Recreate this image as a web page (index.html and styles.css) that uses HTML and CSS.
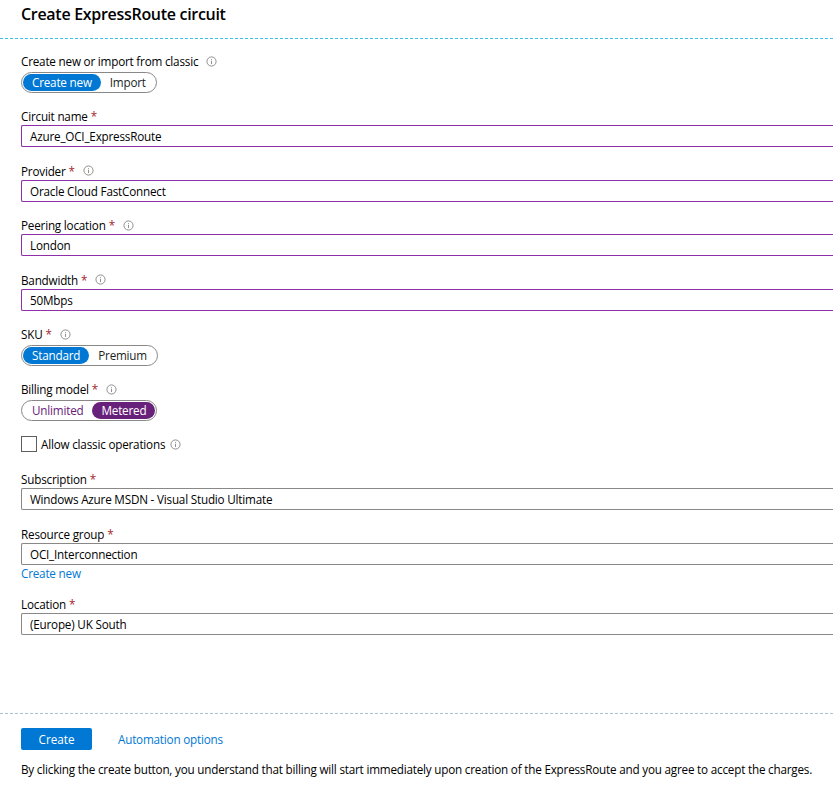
FILE: index.html
```html
<!DOCTYPE html>
<html lang="en">
<head>
<meta charset="utf-8">
<title>Create ExpressRoute circuit</title>
<link rel="stylesheet" href="styles.css">
</head>
<body>
<div class="blade">
  <header class="blade-header">
    <h1 class="title">Create ExpressRoute circuit</h1>
  </header>
  <main class="form">
    <div class="field">
      <div class="label">Create new or import from classic <svg class="info" viewBox="0 0 12 12"><circle cx="6" cy="6" r="5" /><path d="M6 5.2v3.6M6 3.4v0.9" /></svg></div>
      <div class="toggle">
        <span class="opt sel-blue">Create new</span><span class="opt">Import</span>
      </div>
    </div>
    <div class="field">
      <div class="label">Circuit name <span class="req">*</span></div>
      <div class="input dirty">Azure_OCI_ExpressRoute</div>
    </div>
    <div class="field">
      <div class="label">Provider <span class="req">*</span> <svg class="info" viewBox="0 0 12 12"><circle cx="6" cy="6" r="5" /><path d="M6 5.2v3.6M6 3.4v0.9" /></svg></div>
      <div class="input dirty">Oracle Cloud FastConnect</div>
    </div>
    <div class="field">
      <div class="label">Peering location <span class="req">*</span> <svg class="info" viewBox="0 0 12 12"><circle cx="6" cy="6" r="5" /><path d="M6 5.2v3.6M6 3.4v0.9" /></svg></div>
      <div class="input dirty">London</div>
    </div>
    <div class="field">
      <div class="label">Bandwidth <span class="req">*</span> <svg class="info" viewBox="0 0 12 12"><circle cx="6" cy="6" r="5" /><path d="M6 5.2v3.6M6 3.4v0.9" /></svg></div>
      <div class="input dirty">50Mbps</div>
    </div>
    <div class="field">
      <div class="label">SKU <span class="req">*</span> <svg class="info" viewBox="0 0 12 12"><circle cx="6" cy="6" r="5" /><path d="M6 5.2v3.6M6 3.4v0.9" /></svg></div>
      <div class="toggle">
        <span class="opt sel-blue">Standard</span><span class="opt">Premium</span>
      </div>
    </div>
    <div class="field">
      <div class="label">Billing model <span class="req">*</span> <svg class="info" viewBox="0 0 12 12"><circle cx="6" cy="6" r="5" /><path d="M6 5.2v3.6M6 3.4v0.9" /></svg></div>
      <div class="toggle">
        <span class="opt purple-text">Unlimited</span><span class="opt sel-purple">Metered</span>
      </div>
    </div>
    <div class="check-row">
      <span class="checkbox"></span>
      <span class="check-label">Allow classic operations</span>
      <svg class="info" viewBox="0 0 12 12"><circle cx="6" cy="6" r="5" /><path d="M6 5.2v3.6M6 3.4v0.9" /></svg>
    </div>
    <div class="field">
      <div class="label">Subscription <span class="req">*</span></div>
      <div class="input">Windows Azure MSDN - Visual Studio Ultimate</div>
    </div>
    <div class="field">
      <div class="label">Resource group <span class="req">*</span></div>
      <div class="input">OCI_Interconnection</div>
      <a class="link create-link" href="#">Create new</a>
    </div>
    <div class="field">
      <div class="label">Location <span class="req">*</span></div>
      <div class="input">(Europe) UK South</div>
    </div>
  </main>
  <footer class="blade-footer">
    <div class="actions">
      <button class="btn-primary" type="button">Create</button>
      <a class="link" href="#">Automation options</a>
    </div>
    <p class="notice">By clicking the create button, you understand that billing will start immediately upon creation of the ExpressRoute and you agree to accept the charges.</p>
  </footer>
</div>
</body>
</html>
```

FILE: styles.css
```css
* { box-sizing: border-box; }
html, body {
  margin: 0;
  padding: 0;
  background: #ffffff;
  overflow: hidden;
}
body {
  font-family: "Segoe UI", "Open Sans", "Liberation Sans", sans-serif;
  font-size: 11.7px;
  letter-spacing: -0.2px;
  color: #000;
  width: 833px;
  height: 785px;
}
.blade {
  display: flex;
  flex-direction: column;
  height: 785px;
}
.blade-header {
  flex: none;
  padding: 4px 0 0 21px;
  height: 39px;
  border-bottom: 1px dashed #3cc0e6;
}
.title {
  margin: 0;
  font-size: 16px;
  font-weight: 600;
  line-height: 20px;
  letter-spacing: -0.3px;
  color: #000;
}
.form {
  flex: 1;
  padding: 13px 0 0 21px;
}
.field {
  margin-bottom: 14.5px;
}
.label {
  display: flex;
  align-items: center;
  gap: 3px;
  height: 18px;
  line-height: 18px;
  color: #000;
}
.req {
  color: #a4262c;
}
.info {
  width: 11px;
  height: 11px;
  margin-left: 5px;
  fill: none;
  stroke: #7a7876;
  stroke-width: 0.9;
}
.input {
  height: 22px;
  line-height: 20px;
  padding: 0 8px;
  border: 1px solid #8a8886;
  border-right: 0;
  border-radius: 2px 0 0 2px;
  color: #000;
}
.input.dirty {
  border-color: #8c2fa8;
}
.toggle {
  display: inline-flex;
  align-items: center;
  height: 21px;
  padding: 1px;
  margin-top: 2px;
  margin-bottom: -0.5px;
  border: 1px solid #8a8886;
  border-radius: 11px;
}
.opt {
  height: 17px;
  line-height: 16px;
  padding: 0 9px;
  border-radius: 9px;
  color: #201f1e;
}
.sel-blue {
  background: #0078d4;
  color: #fff;
}
.sel-purple {
  background: #68217a;
  color: #fff;
}
.purple-text {
  color: #68217a;
}
.check-row {
  display: flex;
  align-items: center;
  height: 18px;
  margin: 0 0 17px;
}
.checkbox {
  width: 16px;
  height: 16px;
  border: 1px solid #605e5c;
  margin-right: 4px;
}
.check-label {
  color: #000;
}
.link {
  color: #0078d4;
  text-decoration: none;
}
.create-link {
  display: block;
  line-height: 16px;
}
.blade-footer {
  flex: none;
  border-top: 1px dashed #a6c3d6;
  padding: 14px 0 0 21px;
  height: 72px;
}
.actions {
  display: flex;
  align-items: center;
  gap: 26px;
}
.btn-primary {
  width: 71px;
  height: 22px;
  border: 0;
  border-radius: 2px;
  background: #0078d4;
  color: #fff;
  font: inherit;
  padding: 0;
}
.notice {
  margin: 11px 0 0;
  color: #000;
  line-height: 16px;
  white-space: nowrap;
}
```
